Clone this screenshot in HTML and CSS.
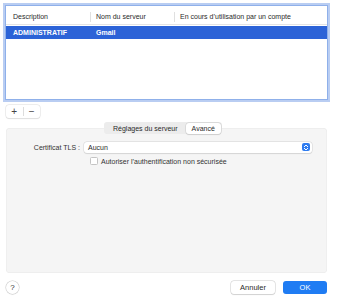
FILE: index.html
```html
<!DOCTYPE html>
<html lang="fr">
<head>
<meta charset="utf-8">
<link rel="stylesheet" href="styles.css">
</head>
<body>
<div class="dialog">
  <div class="table">
    <div class="row head">
      <div class="c c1">Description</div>
      <div class="c c2">Nom du serveur</div>
      <div class="c c3">En cours d’utilisation par un compte</div>
    </div>
    <div class="row sel">
      <div class="c c1">ADMINISTRATIF</div>
      <div class="c c2">Gmail</div>
      <div class="c c3"></div>
    </div>
  </div>
  <div class="pm">
    <span class="pmb">+</span><span class="pmsep"></span><span class="pmb">−</span>
  </div>
  <div class="panelwrap">
    <div class="seg">
      <span class="segi">Réglages du serveur</span>
      <span class="segi on">Avancé</span>
    </div>
    <div class="panel">
      <div class="frow">
        <span class="lbl">Certificat TLS :</span>
        <div class="popup">
          <span>Aucun</span>
          <span class="step"><svg width="6" height="7" viewBox="0 0 6 7"><path d="M1 3 L3 1 L5 3 M1 4 L3 6 L5 4" fill="none" stroke="#fff" stroke-width="1"/></svg></span>
        </div>
      </div>
      <div class="crow">
        <span class="cb"></span>
        <span>Autoriser l’authentification non sécurisée</span>
      </div>
    </div>
  </div>
  <div class="bottom">
    <span class="help">?</span>
    <div class="btns">
      <span class="btn">Annuler</span>
      <span class="btn ok">OK</span>
    </div>
  </div>
</div>
</body>
</html>
```
FILE: styles.css
```css
* { box-sizing: border-box; }
body {
  margin: 0;
  background: #fff;
  font-family: "Liberation Sans", Arial, sans-serif;
  font-size: 7px;
  color: #2a2a2a;
}
.dialog {
  width: 340px;
  height: 300px;
  padding: 5px 13px 0 6px;
  display: flex;
  flex-direction: column;
}
.table {
  height: 95px;
  border: 1px solid #8fb0ea;
  box-shadow: 0 0 0 2px #b9cdf2;
  background: #fff;
  padding-top: 4px;
  margin-left: -1px;
  width: 323px;
  flex-shrink: 0;
}
.row {
  display: flex;
  height: 13px;
  align-items: center;
}
.head {
  height: 15px;
  border-bottom: 1px solid #e4e4e4;
  margin-bottom: 1px;
  align-items: flex-start;
  padding-top: 2px;
}
.head .c { border-right: 1px solid #e0e0e0; }
.head .c3 { border-right: none; }
.c { padding-left: 7px; height: 10px; line-height: 10px; white-space: nowrap; }
.c1 { width: 85px; }
.c2 { width: 84px; padding-left: 5px; }
.c3 { flex: 1; padding-left: 5px; }
.sel { background: #2c63d7; color: #fff; font-weight: bold; }
.pm {
  margin-top: 5px;
  width: 34px;
  height: 13px;
  flex-shrink: 0;
  border-radius: 3px;
  box-shadow: 0 0 0 0.5px #ddd, 0 0.5px 1px rgba(0,0,0,0.12);
  display: flex;
  align-items: center;
  background: #fff;
}
.pmb { flex: 1; text-align: center; font-size: 10px; line-height: 13px; color: #444; }
.pmsep { width: 1px; height: 9px; background: #ddd; }
.panelwrap {
  position: relative;
  margin-top: 10px;
  width: 321px;
  flex-shrink: 0;
}
.seg {
  position: absolute;
  left: 98px;
  top: -6px;
  display: flex;
  align-items: center;
  height: 12px;
  background: #ececec;
  border-radius: 3px;
  padding: 0 1px;
}
.segi { padding: 0 6px; line-height: 11px; }
.segi:first-child { padding: 0 8px; }
.segi.on {
  background: #fff;
  border-radius: 3px;
  box-shadow: 0 0 0 0.5px #ccc, 0 0.5px 1px rgba(0,0,0,0.15);
}
.panel {
  height: 145px;
  background: #f5f5f5;
  border-radius: 4px;
  box-shadow: inset 0 0 0 0.5px #e8e8e8;
  padding: 13px 0 0 0;
}
.frow { display: flex; align-items: center; height: 12px; }
.lbl { width: 78px; text-align: right; padding-right: 4px; color: #333; }
.popup {
  width: 228px;
  height: 11px;
  background: #fff;
  border-radius: 3px;
  box-shadow: 0 0 0 0.5px #d4d4d4, 0 0.5px 1px rgba(0,0,0,0.12);
  display: flex;
  align-items: center;
  justify-content: space-between;
  padding: 0 2px 0 4px;
}
.step {
  width: 8px;
  height: 8px;
  border-radius: 2px;
  background: #2f7cf0;
  display: flex;
  align-items: center;
  justify-content: center;
}
.crow {
  display: flex;
  align-items: center;
  margin-top: 4px;
  padding-left: 84px;
  gap: 3px;
  color: #333;
}
.cb {
  flex-shrink: 0;
  width: 8px;
  height: 8px;
  border-radius: 1.5px;
  background: #fff;
  border: 1px solid #c4c4c4;
}
.bottom {
  margin-top: 8px;
  width: 321px;
  display: flex;
  justify-content: space-between;
  align-items: center;
}
.help {
  width: 13px;
  height: 13px;
  border-radius: 50%;
  background: #fff;
  box-shadow: 0 0 0 0.5px #ccc, 0 0.5px 1px rgba(0,0,0,0.15);
  text-align: center;
  line-height: 13px;
  font-size: 8px;
  color: #333;
}
.btns { display: flex; gap: 8px; }
.btn {
  width: 44px;
  height: 13px;
  line-height: 13px;
  text-align: center;
  background: #fff;
  border-radius: 3px;
  box-shadow: 0 0 0 0.5px #ccc, 0 0.5px 1px rgba(0,0,0,0.15);
  font-size: 7.5px;
}
.btn.ok { background: #1f7cf3; color: #fff; box-shadow: none; }
```
